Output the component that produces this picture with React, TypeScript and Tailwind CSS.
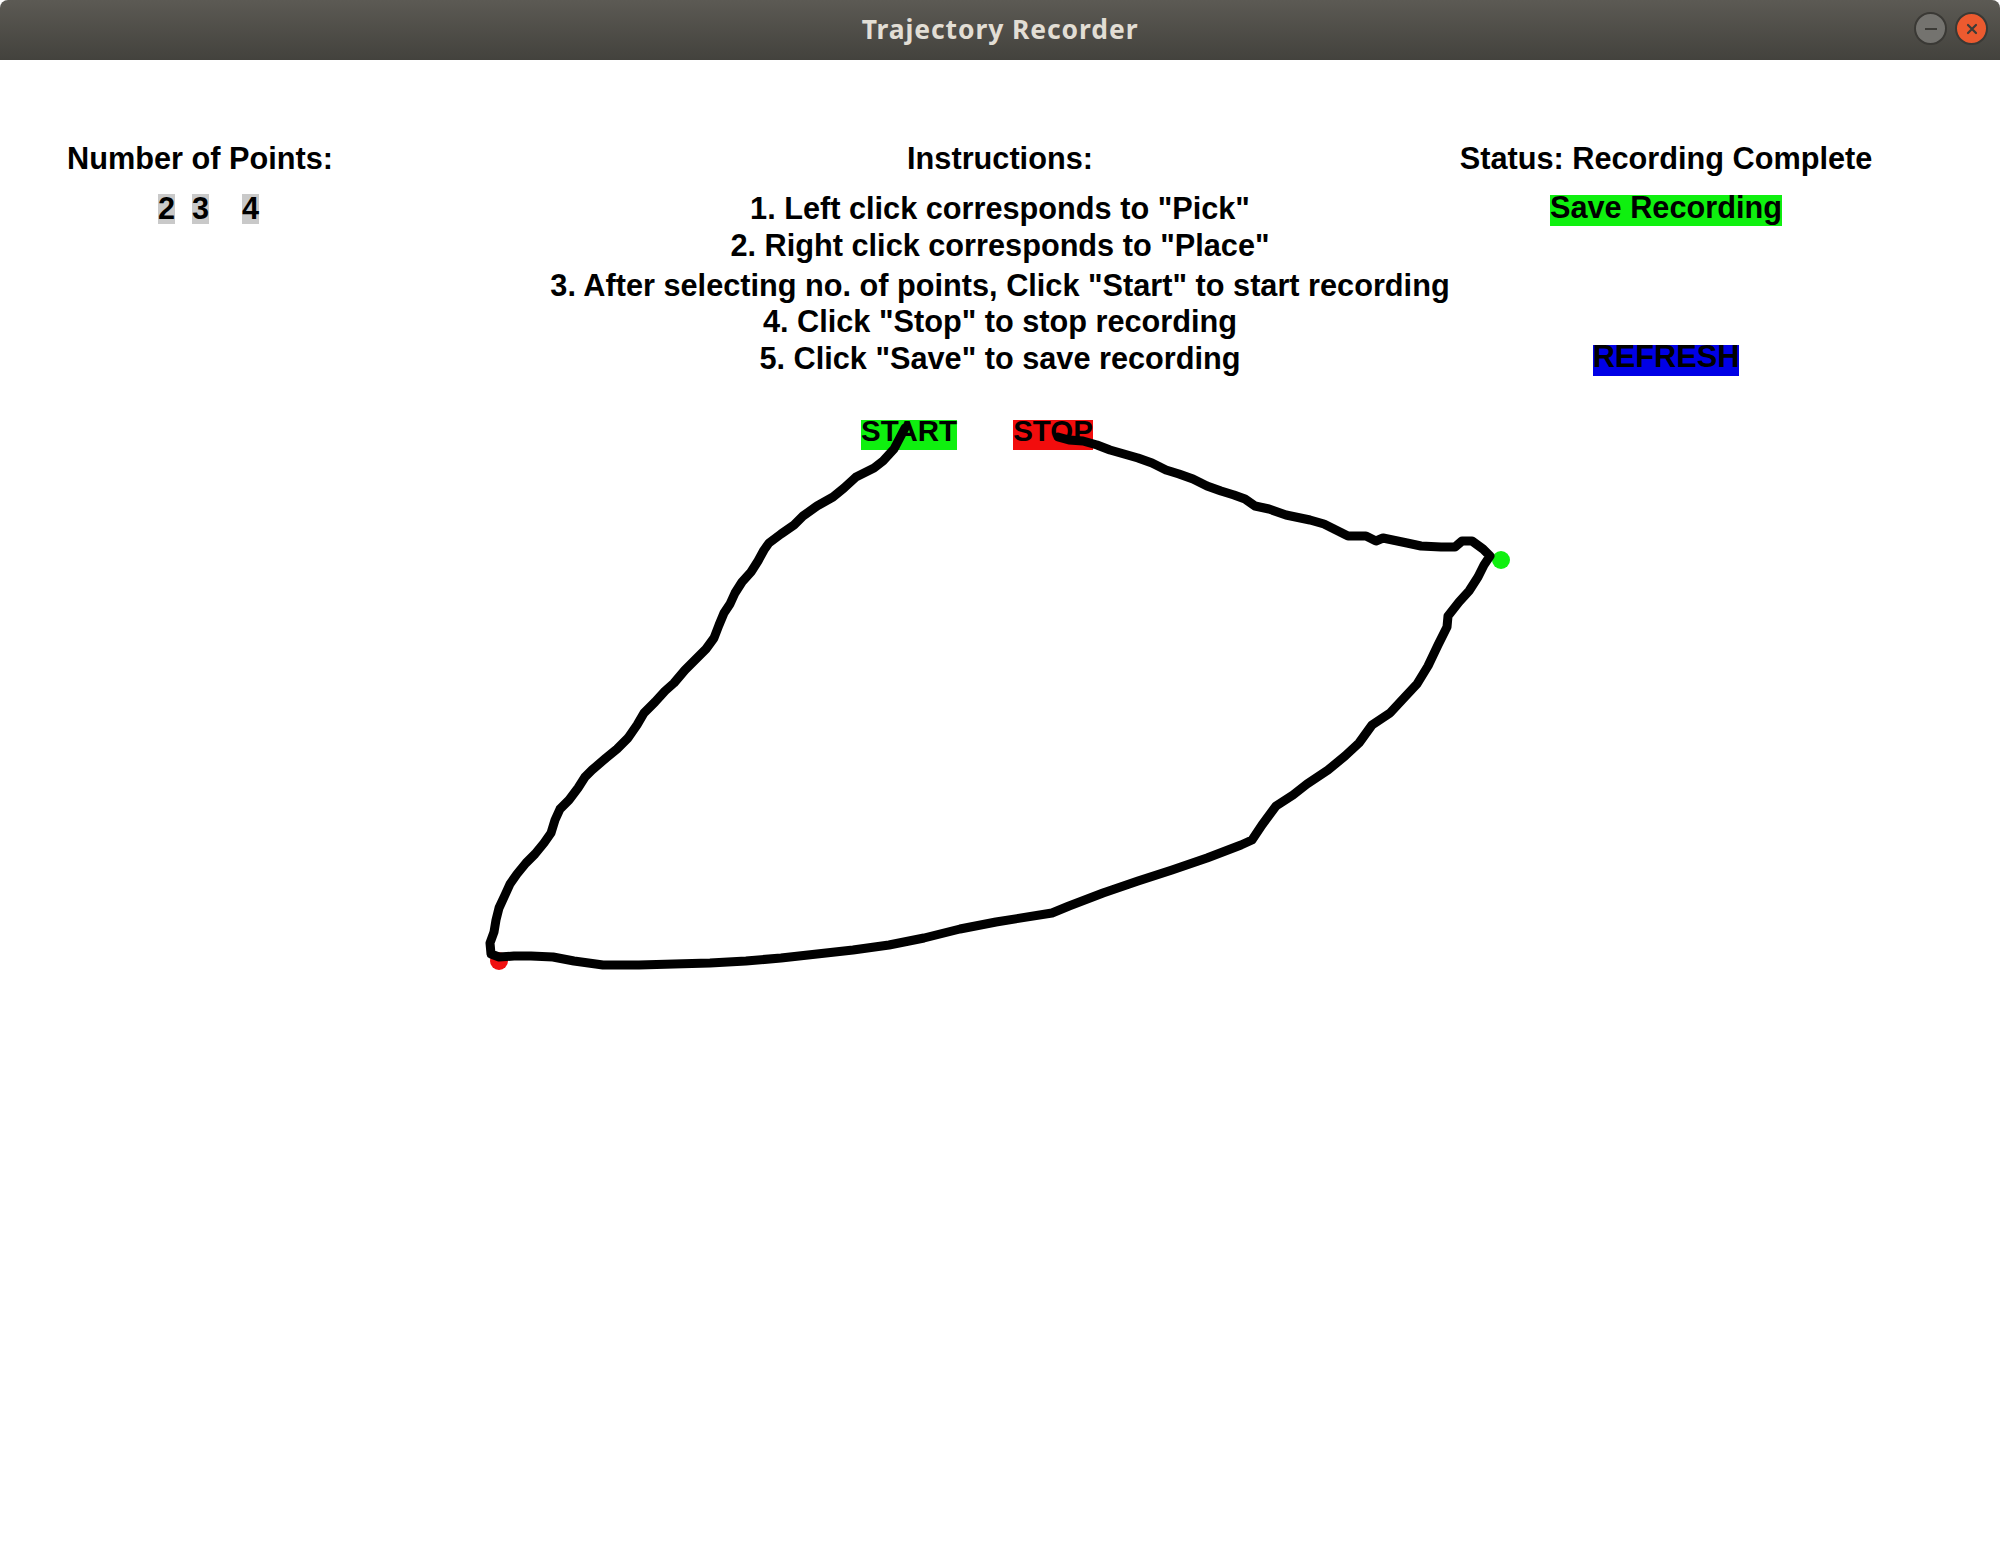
import React from "react";

const path: [number, number][] = [
  [905, 428], [894, 449], [883, 461], [874, 468], [856, 477], [844, 488], [833, 497],
  [817, 506], [803, 516], [794, 525], [781, 534], [769, 543], [764, 550], [758, 561],
  [751, 572], [742, 582], [735, 593], [730, 604], [724, 613], [719, 625], [714, 638],
  [706, 649], [696, 659], [685, 670], [674, 683], [665, 691], [655, 702], [644, 713],
  [637, 725], [628, 738], [617, 749], [606, 758], [592, 770], [585, 777], [578, 788],
  [569, 800], [560, 809], [555, 820], [551, 833], [544, 843], [535, 854], [526, 863],
  [517, 874], [510, 884], [505, 895], [499, 908], [496, 920], [494, 932], [490, 943],
  [491, 954], [499, 957], [514, 956], [531, 956], [553, 957], [574, 961], [603, 965],
  [639, 965], [674, 964], [710, 963], [746, 961], [781, 958], [817, 954], [853, 950],
  [889, 945], [924, 938], [960, 929], [996, 922], [1052, 913], [1069, 906], [1103, 893],
  [1138, 881], [1172, 870], [1207, 858], [1241, 845], [1252, 840], [1262, 825], [1276, 806],
  [1293, 795], [1307, 784], [1328, 770], [1345, 756], [1359, 743], [1372, 725], [1390, 713],
  [1403, 699], [1417, 684], [1428, 666], [1438, 645], [1447, 627], [1448, 616], [1459, 602],
  [1469, 591], [1478, 577], [1484, 565], [1490, 556], [1483, 549], [1472, 541], [1462, 541],
  [1455, 547], [1441, 547], [1421, 546], [1407, 543], [1383, 538], [1376, 541], [1366, 536],
  [1348, 536], [1338, 531], [1324, 524], [1310, 520], [1286, 515], [1269, 509], [1255, 506],
  [1245, 499], [1234, 495], [1221, 491], [1207, 486], [1193, 479], [1179, 474], [1166, 470],
  [1152, 463], [1138, 458], [1124, 454], [1110, 450], [1097, 445], [1083, 441], [1069, 440],
  [1058, 437],
];

const instructions = [
  { text: '1. Left click corresponds to "Pick"', cls: "mt-[16px]" },
  { text: '2. Right click corresponds to "Place"', cls: "mt-0" },
  { text: '3. After selecting no. of points, Click "Start" to start recording', cls: "mt-[3px]" },
  { text: '4. Click "Stop" to stop recording', cls: "mt-[-1px]" },
  { text: '5. Click "Save" to save recording', cls: "mt-0" },
];

function TitleBar() {
  return (
    <div className="relative h-[60px] rounded-t-[8px] bg-gradient-to-b from-[#5c5a54] to-[#43423d] flex items-center justify-center">
      <span
        className="text-[#e2ded5] text-[26.5px] font-bold tracking-[0.9px]"
        style={{ fontFamily: '"Noto Sans", "DejaVu Sans", sans-serif' }}
      >
        Trajectory Recorder
      </span>
      <div className="absolute right-[12px] top-[12px] flex gap-[8px]">
        <div className="w-[33px] h-[33px] rounded-full bg-[#74736f] border-2 border-[#3a3935] flex items-center justify-center">
          <div className="w-[12px] h-[2px] bg-[#3c3b37]" />
        </div>
        <div className="w-[33px] h-[33px] rounded-full bg-[#ec5a2f] border-2 border-[#3a3935] flex items-center justify-center">
          <svg width="14" height="14" viewBox="0 0 14 14">
            <path d="M3 3 L11 11 M11 3 L3 11" stroke="#3c3b37" strokeWidth="2.2" strokeLinecap="round" />
          </svg>
        </div>
      </div>
    </div>
  );
}

export default function App() {
  return (
    <div
      className="relative w-[2000px] h-[1560px] bg-white text-black font-bold overflow-hidden"
      style={{ fontFamily: '"Liberation Sans", Arial, sans-serif' }}
    >
      <TitleBar />
      <div className="flex pt-[84px] text-[30.7px]">
        {/* number of points */}
        <div className="w-[400px] flex flex-col">
          <div className="text-center leading-[30px]">Number of Points:</div>
          <div className="flex mt-[20px] ml-[158px] leading-[30px]">
            <div className="w-[17px] h-[30px] bg-[#c9c9c9] flex justify-center">2</div>
            <div className="w-[17px] h-[30px] bg-[#c9c9c9] flex justify-center ml-[17px]">3</div>
            <div className="w-[17px] h-[30px] bg-[#c9c9c9] flex justify-center ml-[33px]">4</div>
          </div>
        </div>

        {/* instructions */}
        <div className="ml-[150px] w-[900px] flex flex-col">
          <div className="text-center leading-[30px]">Instructions:</div>
          <div className="flex flex-col">
            {instructions.map((l) => (
              <div key={l.text} className={`${l.cls} text-center leading-[37px] whitespace-nowrap`}>
                {l.text}
              </div>
            ))}
          </div>
          <div className="flex mt-[43px] pl-[311px] gap-[56px]">
            <div className="h-[30px] bg-[#0ff00f] leading-[22px] text-[29.5px]">START</div>
            <div className="h-[30px] bg-[#f20d0d] leading-[22px] text-[29.5px]">STOP</div>
          </div>
        </div>

        {/* status */}
        <div className="w-[432px] flex flex-col items-center">
          <div className="leading-[30px] whitespace-nowrap">Status: Recording Complete</div>
          <div className="mt-[21px] h-[31px] bg-[#0ff00f] leading-[25px] whitespace-nowrap">
            Save Recording
          </div>
          <div className="mt-[119px] h-[31px] bg-[#0000e6] leading-[23px]">REFRESH</div>
        </div>
      </div>

      {/* recorded trajectory canvas */}
      <svg className="absolute inset-0 pointer-events-none" width="2000" height="1560">
        <circle cx="499" cy="961" r="9" fill="#f01010" />
        <circle cx="1501" cy="560" r="9" fill="#10f010" />
        <polyline
          points={path.map((p) => p.join(",")).join(" ")}
          fill="none"
          stroke="#000"
          strokeWidth="9"
          strokeLinejoin="round"
          strokeLinecap="round"
        />
      </svg>
    </div>
  );
}
